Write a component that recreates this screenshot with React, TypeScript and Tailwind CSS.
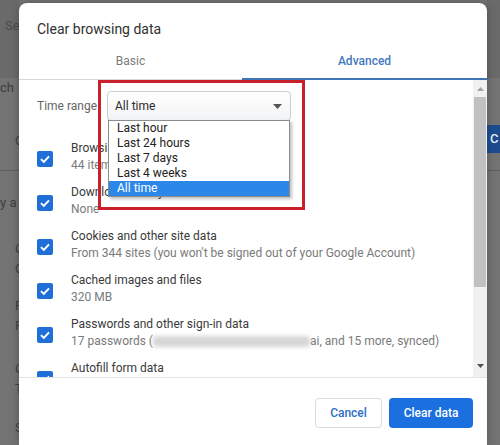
import React from "react";

function Check() {
  return (
    <div className="w-[16px] h-[16px] mt-[4px] mr-[18px] rounded-[2px] bg-[#1f6fd6] flex items-center justify-center shrink-0">
      <svg width="12" height="12" viewBox="0 0 12 12">
        <path d="M2 6.2 L4.8 9 L10 3.4" fill="none" stroke="white" strokeWidth="1.9" />
      </svg>
    </div>
  );
}

function Row({ title, sub }: { title: string; sub: React.ReactNode }) {
  return (
    <div className="h-[44px] flex items-center shrink-0">
      <Check />
      <div className="flex flex-col text-[12px] leading-[17px] whitespace-nowrap">
        <div className="text-[#3a3a3a]">{title}</div>
        <div className="text-[#7a7a7a]">{sub}</div>
      </div>
    </div>
  );
}

export default function App() {
  return (
    <div className="relative w-[500px] h-[445px] overflow-hidden bg-[#737373] font-[Roboto,'Liberation_Sans',sans-serif]">
      {/* background page */}
      <div className="flex w-full h-full">
        <div className="w-[19px] flex flex-col text-[13px] text-[#3e3e3e] leading-none whitespace-nowrap overflow-hidden">
          <div className="h-[78px] bg-[#6a6a6a] shrink-0">
            <div className="h-[50px] flex items-center pl-[5px] text-[#4c4c4c]">Se</div>
          </div>
          <div className="h-[18px] flex items-center shrink-0">ch</div>
          <div className="h-[35px] shrink-0" />
          <div className="h-[18px] flex items-center pl-[15px] shrink-0">C</div>
          <div className="h-[21px] shrink-0" />
          <div className="h-[1px] bg-[#5f5f5f] shrink-0" />
          <div className="h-[22px] shrink-0" />
          <div className="h-[18px] flex items-center shrink-0">y a</div>
          <div className="h-[27px] shrink-0" />
          <div className="h-[20px] flex items-center pl-[15px] shrink-0">C</div>
          <div className="h-[20px] flex items-center pl-[15px] shrink-0">C</div>
          <div className="h-[17px] shrink-0" />
          <div className="h-[20px] flex items-center pl-[15px] shrink-0">F</div>
          <div className="h-[20px] flex items-center pl-[15px] shrink-0">F</div>
          <div className="h-[23px] shrink-0" />
          <div className="h-[20px] flex items-center pl-[15px] shrink-0">C</div>
          <div className="h-[20px] flex items-center pl-[15px] shrink-0">T</div>
          <div className="h-[19px] shrink-0" />
          <div className="h-[20px] flex items-center pl-[15px] shrink-0">S</div>
        </div>
        <div className="flex-1" />
        <div className="w-[13px] flex flex-col">
          <div className="h-[78px] bg-[#6a6a6a] shrink-0" />
          <div className="h-[47px] shrink-0" />
          <div className="h-[28px] bg-[#1c4c8e] shrink-0 flex items-center pl-[3px] text-[13px] text-[#e8eef6] font-medium overflow-hidden">C</div>
          <div className="h-[17px] shrink-0" />
          <div className="h-[1px] bg-[#5f5f5f] shrink-0" />
        </div>
      </div>

      {/* dialog */}
      <div className="absolute left-[19px] top-[3px] w-[468px] h-[442px] bg-white rounded-t-[8px] flex flex-col overflow-hidden shadow-[0_0_8px_rgba(0,0,0,0.25)]">
        <div className="pt-[16px] pb-[5px] px-[18px] text-[14px] leading-[20px] text-[#303030]">Clear browsing data</div>
        <div className="flex h-[36px] shrink-0">
          <div className="w-[223px] flex flex-col">
            <div className="h-[34px] flex items-center justify-center text-[12px] text-[#7b7b7b]">Basic</div>
            <div className="h-[1px] mt-[1px] bg-[#d8d8d8]" />
          </div>
          <div className="flex-1 flex flex-col">
            <div className="h-[34px] flex items-center justify-center text-[12px] font-medium text-[#4479c0]">Advanced</div>
            <div className="h-[2px] bg-[#3f74b8]" />
          </div>
        </div>
        <div className="h-[297px] flex shrink-0">
          <div className="flex-1 overflow-hidden pl-[18px] pt-[11px] flex flex-col">
            <div className="h-[30px] flex items-center shrink-0">
              <div className="w-[70px] text-[12px] text-[#666]">Time range</div>
              <div className="w-[184px] h-[30px] rounded-[4px] border border-[#c9ced4] bg-gradient-to-b from-white to-[#f2f3f5] flex items-center justify-between pl-[7px] pr-[8px] text-[12px] text-[#2a2a2a]">
                <span>All time</span>
                <svg width="9" height="5" viewBox="0 0 9 5">
                  <path d="M0 0 L9 0 L4.5 5 Z" fill="#555" />
                </svg>
              </div>
            </div>
            <div className="h-[14px] shrink-0" />
            <Row title="Browsing history" sub="44 items" />
            <Row title="Download history" sub="None" />
            <Row title="Cookies and other site data" sub="From 344 sites (you won't be signed out of your Google Account)" />
            <Row title="Cached images and files" sub="320 MB" />
            <Row
              title="Passwords and other sign-in data"
              sub={
                <span className="flex items-center">
                  <span>17 passwords (</span>
                  <span className="inline-block w-[157px] h-[11px] bg-[#d6d6d6] blur-[2px] rounded-[3px]" />
                  <span>ai, and 15 more, synced)</span>
                </span>
              }
            />
            <Row title="Autofill form data" sub="Addresses, payment methods" />
          </div>
          <div className="w-[14px] bg-[#f1f1f1] flex flex-col">
            <div className="h-[17px] flex items-center justify-center shrink-0">
              <svg width="7" height="4" viewBox="0 0 7 4"><path d="M0 4 L7 4 L3.5 0 Z" fill="#a3a3a3" /></svg>
            </div>
            <div className="h-[190px] mx-[1px] bg-[#c1c1c1] shrink-0" />
            <div className="flex-1" />
            <div className="h-[22px] flex items-center justify-center shrink-0">
              <svg width="7" height="4" viewBox="0 0 7 4"><path d="M0 0 L7 0 L3.5 4 Z" fill="#505050" /></svg>
            </div>
          </div>
        </div>
        <div className="flex-1 border-t border-[#e3e3e3] flex justify-end gap-[7px] pt-[20px] pr-[14px]">
          <div className="w-[67px] h-[30px] rounded-[4px] border border-[#d8dbe0] flex items-center justify-center text-[12px] font-medium text-[#2d6fc4]">Cancel</div>
          <div className="w-[84px] h-[30px] rounded-[4px] bg-[#1c6fde] flex items-center justify-center text-[12px] font-medium text-white">Clear data</div>
        </div>
      </div>

      {/* dropdown list */}
      <div className="absolute left-[108px] top-[120px] w-[182px] h-[77px] bg-white border border-[#8c8c8c] shadow-[2px_2px_3px_rgba(0,0,0,0.25)] flex flex-col text-[12px] leading-[15px] text-[#222]">
        <div className="h-[15px] pl-[8px]">Last hour</div>
        <div className="h-[15px] pl-[8px]">Last 24 hours</div>
        <div className="h-[15px] pl-[8px]">Last 7 days</div>
        <div className="h-[15px] pl-[8px]">Last 4 weeks</div>
        <div className="h-[15px] pl-[8px] bg-[#2b88e9] text-white">All time</div>
      </div>

      {/* red highlight frame */}
      <div className="absolute left-[98px] top-[80px] w-[207px] h-[130px] border-[3px] border-[#c9212b]" />
    </div>
  );
}
